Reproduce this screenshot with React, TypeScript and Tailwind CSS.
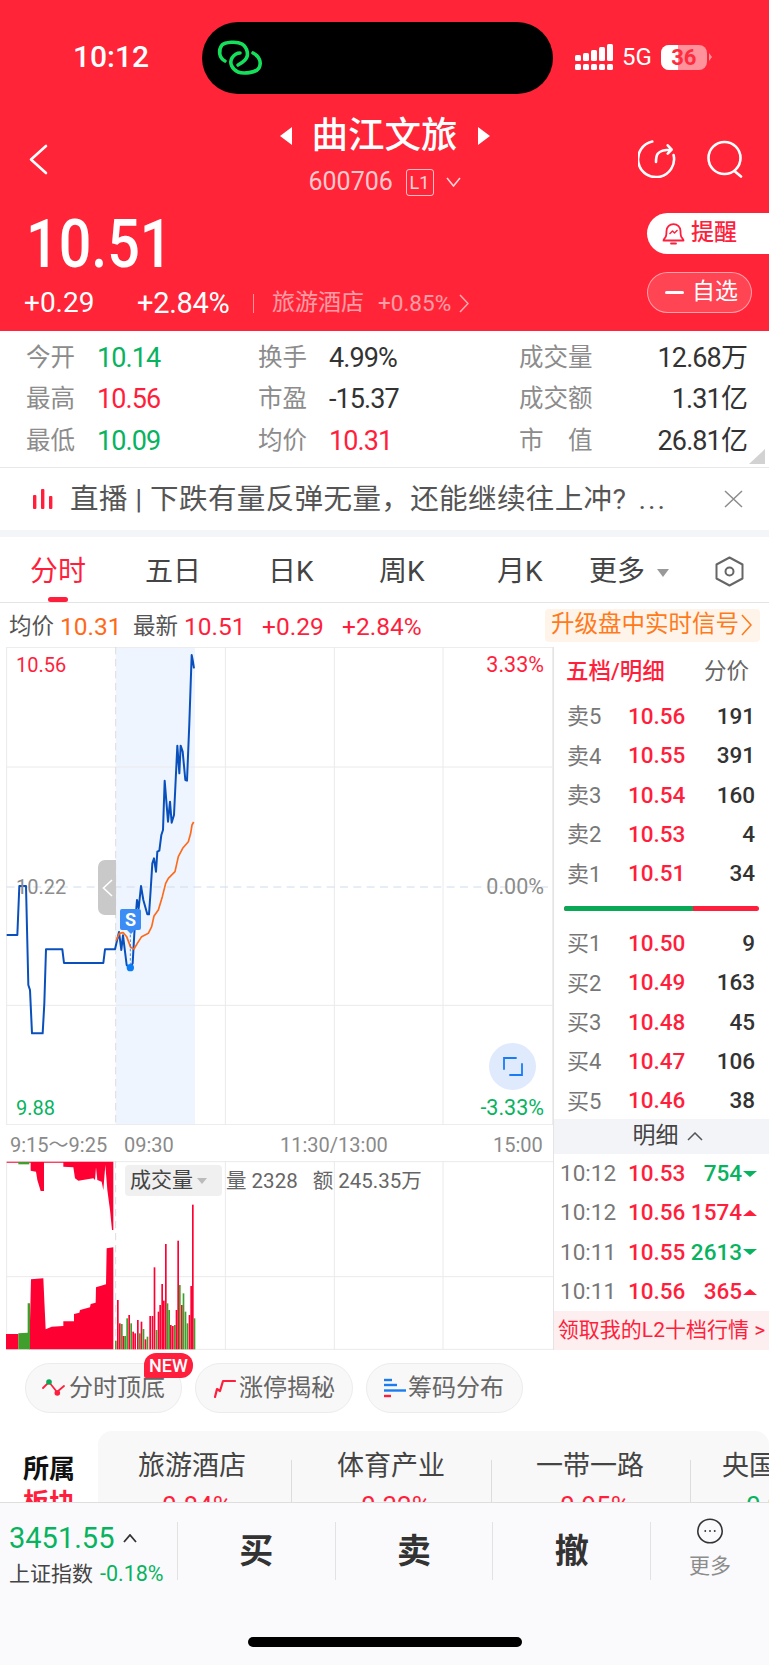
const sans = "font-['Roboto','Noto_Sans_CJK_SC',sans-serif]";

const RED = "text-[#ff1f3d]";
const GREEN = "text-[#08b35f]";

const stats = [
  [
    { label: "今开", value: "10.14", tone: GREEN },
    { label: "换手", value: "4.99%", tone: "text-[#333]" },
    { label: "成交量", value: "12.68万", tone: "text-[#333]" },
  ],
  [
    { label: "最高", value: "10.56", tone: RED },
    { label: "市盈", value: "-15.37", tone: "text-[#333]" },
    { label: "成交额", value: "1.31亿", tone: "text-[#333]" },
  ],
  [
    { label: "最低", value: "10.09", tone: GREEN },
    { label: "均价", value: "10.31", tone: RED },
    { label: "市\u3000值", value: "26.81亿", tone: "text-[#333]" },
  ],
];

const asks = [
  ["卖5", "10.56", "191"],
  ["卖4", "10.55", "391"],
  ["卖3", "10.54", "160"],
  ["卖2", "10.53", "4"],
  ["卖1", "10.51", "34"],
];
const bids = [
  ["买1", "10.50", "9"],
  ["买2", "10.49", "163"],
  ["买3", "10.48", "45"],
  ["买4", "10.47", "106"],
  ["买5", "10.46", "38"],
];
const ticks = [
  { time: "10:12", price: "10.53", qty: "754", up: false },
  { time: "10:12", price: "10.56", qty: "1574", up: true },
  { time: "10:11", price: "10.55", qty: "2613", up: false },
  { time: "10:11", price: "10.56", qty: "365", up: true },
];

const priceLine =
  "20,885 52,885 58,738 78,738 85,1035 90,1050 96,1180 128,1180 133,1090 138,928 187,928 192,969 310,969 315,928 345,928 357,876 364,930 369,886 380,975 390,985 398,970 403,880 411,780 416,805 423,738 430,780 442,823 447,823 452,750 457,670 462,655 468,695 472,635 478,632 484,585 489,570 494,422 504,545 510,485 515,548 522,525 532,317 538,400 542,317 548,335 556,420 561,422 568,250 575,45 578,60 582,85";
const avgLine =
  "348,903 358,880 370,878 380,890 392,922 402,927 412,910 425,890 445,880 455,860 462,828 475,810 487,770 497,730 505,715 525,695 535,650 548,625 565,605 572,580 576,555 581,546";

// opening-session volume bars: x, top, r(ed) or g(reen)
const volBars: [number, number, string][] = [
  [345, 632, "g"], [351, 510, "r"], [357, 580, "r"], [363, 582, "g"], [368, 618, "r"], [373, 618, "g"],
  [379, 565, "g"], [385, 555, "r"], [391, 580, "g"], [397, 605, "r"], [403, 610, "r"], [411, 570, "r"],
  [417, 610, "g"], [422, 575, "r"], [428, 597, "g"], [434, 628, "r"], [440, 620, "g"], [448, 558, "r"],
  [455, 558, "r"], [461, 412, "r"], [467, 600, "g"], [473, 545, "r"], [478, 525, "r"], [484, 462, "r"],
  [489, 512, "r"], [495, 342, "r"], [500, 520, "g"], [505, 540, "g"], [510, 585, "r"], [516, 588, "r"],
  [522, 585, "g"], [527, 540, "r"], [532, 332, "r"], [537, 465, "g"], [543, 525, "r"], [548, 490, "g"],
  [554, 545, "g"], [560, 580, "g"], [566, 555, "r"], [571, 468, "r"], [576, 224, "r"], [581, 565, "g"],
];

function StatusBar() {
  return (
    <div className="flex h-[94px] items-start pt-[22px]">
      <span className="ml-[73px] mt-[20px] w-[80px] text-[30px] leading-[30px] font-medium text-white">10:12</span>
      <div className="ml-[49px] flex h-[72px] w-[351px] items-center rounded-[36px] bg-black pl-[8px]">
        <svg className="mt-[4px]" width="60" height="60" viewBox="0 0 60 60" fill="none" stroke="#14e05c" strokeWidth="3.6" strokeLinecap="round">
          <path d="M15 31 C9 28 8 20 12 15 C15 12 27 11 32 14 C38 18 39 26 35 30 C33 32 30 34 28 35" />
          <path d="M43 23 C49 26 52 32 49 38 C46 43 33 44 28 42 C22 39 19 33 22 28 C24 25 27 23 30 23" />
        </svg>
      </div>
      <div className="ml-[22px] mt-[22px] flex items-center">
        <svg width="38" height="26" viewBox="0 0 38 26" fill="white">
          <rect x="0" y="11" width="6" height="6" rx="1.5" />
          <rect x="0" y="20" width="6" height="6" rx="1.5" />
          <rect x="8" y="9" width="6" height="8" rx="1.5" />
          <rect x="8" y="20" width="6" height="6" rx="1.5" />
          <rect x="16" y="6" width="6" height="11" rx="1.5" />
          <rect x="16" y="20" width="6" height="6" rx="1.5" />
          <rect x="24" y="3" width="6" height="14" rx="1.5" />
          <rect x="24" y="20" width="6" height="6" rx="1.5" />
          <rect x="32" y="0" width="6" height="17" rx="1.5" />
          <rect x="32" y="20" width="6" height="6" rx="1.5" />
        </svg>
        <span className="ml-[9px] text-[24px] leading-[26px] text-white">5G</span>
        <div className="relative ml-[9px] flex h-[25px] w-[46px] items-center justify-center overflow-hidden rounded-[8px] bg-white/50">
          <div className="absolute inset-y-0 left-0 w-[17px] bg-white" />
          <span className="relative text-[22px] leading-[25px] font-bold text-[#ff2c40]">36</span>
        </div>
        <span className="ml-[2px] h-0 w-0 border-y-[4px] border-l-[3px] border-y-transparent border-l-white/50" />
      </div>
    </div>
  );
}

function TitleRow() {
  return (
    <div className="grid h-[100px] grid-cols-[1fr_auto_1fr] pt-[23px]">
      <div className="pl-[29px] pt-[27px]">
        <svg width="19" height="31" viewBox="0 0 19 31" fill="none" stroke="white" strokeWidth="2.6" strokeLinecap="round" strokeLinejoin="round">
          <path d="M17 2 L2 15.5 L17 29" />
        </svg>
      </div>
      <div className="flex flex-col items-center">
        <div className="flex items-center">
          <span className="h-0 w-0 border-y-[9px] border-r-[12px] border-y-transparent border-r-white" />
          <span className="mx-[20px] text-[36.5px] leading-[38px] font-medium text-white">曲江文旅</span>
          <span className="h-0 w-0 border-y-[9px] border-l-[12px] border-y-transparent border-l-white" />
        </div>
        <div className="mt-[13px] flex items-center">
          <span className="w-[97px] text-[25px] leading-[28px] text-white/75">600706</span>
          <span className="flex h-[27px] w-[28px] items-center justify-center rounded-[3px] border border-white/70 text-[18px] text-white/80">L1</span>
          <svg className="ml-[12px]" width="15" height="10" viewBox="0 0 15 10" fill="none" stroke="white" strokeOpacity="0.8" strokeWidth="1.6">
            <path d="M1 1 L7.5 9 L14 1" />
          </svg>
        </div>
      </div>
      <div className="flex justify-end gap-[31px] pr-[25px] pt-[23px]">
        <svg width="38" height="38" viewBox="0 0 38 38" fill="none" stroke="white" strokeWidth="2.6" strokeLinecap="round" strokeLinejoin="round">
          <path d="M14.3 1.5 A18 18 0 1 0 35.6 15" />
          <path d="M18 22 C18 17 18.5 15 20 13.5 C22 11 26 9.7 33 9.7 M29.7 5.3 L33.7 9.7 L29.7 13.7" />
        </svg>
        <svg width="37" height="38" viewBox="0 0 37 38" fill="none" stroke="white" strokeWidth="2.6" strokeLinecap="round">
          <circle cx="17.5" cy="18" r="16" />
          <path d="M28 31.5 L34 36.5" />
        </svg>
      </div>
    </div>
  );
}

function PriceRow() {
  return (
    <div className="flex justify-between">
      <div>
        <div className="ml-[26px] mt-[21px] h-[60px] origin-left scale-x-[.87] text-[66px] leading-[60px] font-medium text-white">10.51</div>
        <div className="mt-[13px] flex items-center pl-[24px] text-white">
          <span className="w-[113px] text-[28px] leading-[30px]">+0.29</span>
          <span className="w-[116px] whitespace-nowrap text-[29px] leading-[30px] tracking-[-0.3px]">+2.84%</span>
          <span className="h-[19px] w-px bg-white/50" />
          <span className="ml-[18px] text-[23px] leading-[30px] text-white/55">旅游酒店</span>
          <span className="ml-[14px] text-[22.5px] leading-[30px] text-white/55">+0.85%</span>
          <svg className="ml-[8px]" width="10" height="19" viewBox="0 0 10 19" fill="none" stroke="white" strokeOpacity="0.6" strokeWidth="1.6">
            <path d="M1 1 L9 9.5 L1 18" />
          </svg>
        </div>
      </div>
      <div className="mt-[19px] flex flex-col items-end">
        <div className="flex h-[41px] w-[122px] items-center gap-[6px] rounded-l-full bg-white pl-[15px]">
          <svg width="23" height="22" viewBox="0 0 23 22" fill="none" stroke="#ff1f3d" strokeWidth="1.8" strokeLinejoin="round">
            <path d="M4 13 C4.5 11 4.5 9.5 4.5 8 C4.5 4 7.5 1.2 11.5 1.2 C15.5 1.2 18.5 4 18.5 8 C18.5 9.5 18.5 11 19 13 C19.5 15 21.5 16 21.5 17.5 H1.5 C1.5 16 3.5 15 4 13 Z" />
            <path d="M9 20.5 H14" strokeLinecap="round" />
            <path d="M7.5 11 L10.5 8 L12.5 10 L15.5 7" strokeWidth="1.4" />
          </svg>
          <span className="text-[23px] font-medium text-[#ff1f3d]">提醒</span>
        </div>
        <div className="mr-[17px] mt-[18px] flex h-[41px] w-[105px] items-center rounded-full border border-white/50 bg-white/15 pl-[17px]">
          <span className="h-[3px] w-[19px] rounded bg-white" />
          <span className="ml-[8px] text-[23px] text-white">自选</span>
        </div>
      </div>
    </div>
  );
}

function StatsTable() {
  return (
    <div className="relative h-[137px] border-b border-[#e8e8e8] bg-white pt-[6px]">
      {stats.map((row) => (
        <div key={row[0].label} className="grid h-[41.5px] grid-cols-[232px_261px_228px] pl-[26px] items-center">
          {row.map((cell, i) => (
            <div key={cell.label} className={i === 2 ? "flex items-center justify-between" : "flex items-center"}>
              <span className={(i === 2 ? "" : "w-[71px] ") + "text-[24.5px] leading-[30px] text-[#8c8c8c]"}>{cell.label}</span>
              <span className={"text-[27px] leading-[30px] tracking-[-0.9px] " + cell.tone}>{cell.value}</span>
            </div>
          ))}
        </div>
      ))}
      <span className="absolute bottom-[3px] right-[4px] h-0 w-0 border-b-[15px] border-l-[16px] border-b-[#d2d2d2] border-l-transparent" />
    </div>
  );
}

function LiveBar() {
  return (
    <div className="flex h-[62px] items-center bg-white pl-[33px]">
      <svg width="20" height="20" viewBox="0 0 20 20" fill="#ff1f3d">
        <rect x="0" y="6" width="3.4" height="14" rx="1" />
        <rect x="8" y="0" width="3.4" height="20" rx="1" />
        <rect x="16" y="7" width="3.4" height="13" rx="1" />
      </svg>
      <span className="ml-[17px] mt-[2px] w-[600px] whitespace-nowrap text-[28.5px] leading-[34px] tracking-[0.4px] text-[#555]">
        直播 | 下跌有量反弹无量，还能继续往上冲?<span className="ml-[12px] tracking-[2px]">...</span>
      </span>
      <svg className="ml-[54px]" width="19" height="18" viewBox="0 0 19 18" fill="none" stroke="#8c8c8c" strokeWidth="1.5">
        <path d="M1 1 L18 17 M18 1 L1 17" />
      </svg>
    </div>
  );
}

function Tabs() {
  return (
    <div className="relative flex h-[66px] items-center border-b border-[#e4e4e4] bg-white pt-[4px] text-[28px] text-[#444]">
      <span className="ml-[30px] w-[115px] text-[#ff1f3d]">分时</span>
      <span className="w-[123px]">五日</span>
      <span className="w-[111px]">日K</span>
      <span className="w-[118px]">周K</span>
      <span className="w-[92px]">月K</span>
      <span>更多</span>
      <span className="ml-[12px] mt-[2px] h-0 w-0 border-x-[6px] border-t-[8px] border-x-transparent border-t-[#999]" />
      <svg className="ml-[46px]" width="29" height="31" viewBox="0 0 29 31" fill="none" stroke="#666" strokeWidth="2">
        <path d="M14.5 1.5 L27.5 8.5 V22.5 L14.5 29.5 L1.5 22.5 V8.5 Z" strokeLinejoin="round" />
        <circle cx="14.5" cy="15.5" r="4" />
      </svg>
      <span className="absolute bottom-0 left-[48px] h-[5px] w-[20px] rounded-full bg-[#ff1f3d]" />
    </div>
  );
}

function QuoteLine() {
  return (
    <div className="flex h-[44px] items-center bg-white pl-[9px] pt-[4px] text-[24.5px]">
      <span className="text-[22.5px] text-[#555]">均价</span>
      <span className="ml-[6px] w-[73px] text-[#ff6a1a]">10.31</span>
      <span className="text-[22.5px] text-[#555]">最新</span>
      <span className="ml-[6px] w-[78px] text-[#ff1f3d]">10.51</span>
      <span className="w-[80px] text-[#ff1f3d]">+0.29</span>
      <span className="w-[203px] text-[#ff1f3d]">+2.84%</span>
      <div className="-mt-[4px] flex h-[33px] w-[215px] items-center whitespace-nowrap rounded-[4px] bg-[#fff4e9] pl-[6px] text-[23.5px] text-[#ff7a1a]">
        升级盘中实时信号
        <svg className="ml-[2px]" width="11" height="22" viewBox="0 0 11 22" fill="none" stroke="#ff7a1a" strokeWidth="1.6">
          <path d="M1 1 L10 11 L1 21" />
        </svg>
      </div>
    </div>
  );
}

function MainChart() {
  return (
    <div className="relative h-[478px]">
      <svg className="absolute inset-0" width="553" height="478" viewBox="0 21 1659 1434" fill="none">
        <rect x="347" y="21" width="238" height="1434" fill="#eef5fe" />
        <g stroke="#eaeaea" strokeWidth="3">
          <path d="M20 21 V1455 M20 22 H1659 M20 381 H1659 M20 1096 H1659 M20 1454 H1659" />
          <path d="M676 21 V1455 M1003 21 V1455 M1329 21 V1455 M1658 21 V1455" />
        </g>
        <path d="M347 21 V1455" stroke="#ddd" strokeWidth="3" strokeDasharray="22 14" />
        <path d="M20 741 H1659" stroke="#cfdcea" strokeWidth="3" strokeDasharray="24 16" />
        <polyline points={priceLine} stroke="#0a50bd" strokeWidth="6" strokeLinejoin="round" />
        <polyline points={avgLine} stroke="#ff6a1a" strokeWidth="5" strokeLinejoin="round" />
        <path d="M391 870 V985" stroke="#1a7cf0" strokeWidth="2.5" strokeDasharray="8 6" />
        <circle cx="391" cy="983" r="11" fill="#0a7cf5" />
      </svg>
      <span className="absolute left-[16px] top-[6px] text-[20px] leading-[24px] text-[#ff1f3d]">10.56</span>
      <span className="absolute left-[16px] top-[228px] text-[20px] leading-[24px] text-[#8c8c8c]">10.22</span>
      <span className="absolute left-[16px] top-[449px] text-[20px] leading-[24px] text-[#08b35f]">9.88</span>
      <span className="absolute right-[9px] top-[6px] text-[21.5px] leading-[24px] text-[#ff1f3d]">3.33%</span>
      <span className="absolute right-[9px] top-[228px] text-[21.5px] leading-[24px] text-[#8c8c8c]">0.00%</span>
      <span className="absolute right-[9px] top-[449px] text-[21.5px] leading-[24px] text-[#08b35f]">-3.33%</span>
      <div className="absolute left-[98px] top-[213px] flex h-[55px] w-[18px] items-center justify-center rounded-l-[7px] bg-[#c9c9c9]">
        <svg width="11" height="18" viewBox="0 0 11 18" fill="none" stroke="white" strokeWidth="1.6">
          <path d="M10 1 L1.5 9 L10 17" />
        </svg>
      </div>
      <div className="absolute left-[120px] top-[262px] flex h-[21px] w-[21px] items-center justify-center rounded-[2px] bg-[#3b8cf5] text-[18px] leading-[21px] font-bold text-white">
        S
        <span className="absolute left-[7px] top-[21px] h-0 w-0 border-x-[4px] border-t-[4px] border-x-transparent border-t-[#3b8cf5]" />
      </div>
      <div className="absolute right-[17px] top-[396px] flex h-[47px] w-[47px] items-center justify-center rounded-full bg-[#dfeafd]">
        <svg width="22" height="21" viewBox="0 0 22 21" fill="none" stroke="#1a7cf5" strokeWidth="1.8" strokeLinecap="round">
          <path d="M14 2 H2 V13 M8 19 H20 V8" />
        </svg>
      </div>
    </div>
  );
}

function AxisRow() {
  return (
    <div className="flex h-[36px] items-center whitespace-nowrap pl-[10px] pt-[3px] text-[20px] text-[#8a8a8a]">
      <span className="w-[114px]">9:15～9:25</span>
      <span className="w-[156px]">09:30</span>
      <span className="w-[213px]">11:30/13:00</span>
      <span>15:00</span>
    </div>
  );
}

function VolumeChart() {
  return (
    <div className="relative h-[189px]">
      <svg className="absolute inset-0" width="553" height="189" viewBox="0 93 1659 567" fill="none">
        <g stroke="#eaeaea" strokeWidth="3">
          <path d="M20 94 V658 M20 95 H1659 M20 440 H1659 M20 658 H1659" />
          <path d="M676 93 V660 M1003 93 V660 M1329 93 V660" />
        </g>
        <path d="M347 93 V660" stroke="#ddd" strokeWidth="3" strokeDasharray="22 14" />
        <path
          d="M20 95 H340 V300 H336 L330 240 L322 180 L316 105 L310 180 L305 155 L292 150 L288 112 L285 150 L280 145 L235 152 L225 145 L220 112 L190 110 L190 98 H132 V183 H122 L112 150 L108 125 L92 122 V98 H20 Z"
          fill="#ff0033"
        />
        <rect x="55" y="96" width="33" height="7" fill="#3f9e2c" />
        <path
          d="M88 658 L93 448 L130 445 L133 512 L137 598 L155 590 L190 588 V574 H222 V552 L238 548 L240 540 L270 532 L272 522 L287 518 L288 472 L318 463 L320 355 L340 352 V658 Z M18 658 V612 H55 V658 Z"
          fill="#ff0033"
        />
        <path d="M55 658 V610 L83 608 V520 H90 V658 Z" fill="#3f9e2c" />
        {volBars.map(([x, top, c]) => (
          <rect key={x} x={x} y={top} width="5" height={658 - top} fill={c === "r" ? "#ff0033" : "#3f9e2c"} />
        ))}
      </svg>
      <div className="absolute left-[125px] top-[4px] flex h-[31px] w-[97px] items-center rounded-[4px] bg-[#f0f0f0] pl-[5px] text-[21px] text-[#444]">
        成交量
        <span className="ml-[4px] h-0 w-0 border-x-[5px] border-t-[6px] border-x-transparent border-t-[#bbb]" />
      </div>
      <div className="absolute left-[226px] top-[6px] text-[20.5px] leading-[28px] text-[#666]">
        量 2328<span className="ml-[15px]">额 245.35万</span>
      </div>
    </div>
  );
}

function BookRow({ row }: { row: string[] }) {
  return (
    <div className="grid h-[39.4px] grid-cols-[61px_1fr_auto] items-center pl-[13px] pr-[14px]">
      <span className="text-[22px] text-[#777]">{row[0]}</span>
      <span className="text-[22.5px] font-medium text-[#ff1f3d]">{row[1]}</span>
      <span className="text-[22.5px] font-medium text-[#333]">{row[2]}</span>
    </div>
  );
}

function OrderBook() {
  return (
    <div className="w-[216px] border-l border-[#e4e4e4]">
      <div className="flex h-[50px] items-center justify-between pl-[12px] pr-[20px] text-[22.5px]">
        <span className="font-medium text-[#ff1f3d]">五档/明细</span>
        <span className="text-[#666]">分价</span>
      </div>
      {asks.map((row) => (
        <BookRow key={row[0]} row={row} />
      ))}
      <div className="mx-[10px] mb-[13px] mt-[12px] flex h-[5px] overflow-hidden rounded-full bg-[#ff1f3d]">
        <div className="w-[129px] bg-[#08a857]" />
      </div>
      {bids.map((row) => (
        <BookRow key={row[0]} row={row} />
      ))}
      <div className="-mt-[2px] flex h-[35px] items-center justify-center gap-[8px] bg-[#f3f4f8] pl-[12px] text-[23px] text-[#444]">
        明细
        <svg width="16" height="9" viewBox="0 0 16 9" fill="none" stroke="#555" strokeWidth="1.5">
          <path d="M1 8 L8 1 L15 8" />
        </svg>
      </div>
      {ticks.map((t, i) => (
        <div key={i} className="flex h-[39.4px] items-center pl-[6px] pr-[12px] text-[22.5px]">
          <span className="w-[68px] text-[#777]">{t.time}</span>
          <span className="font-medium text-[#ff1f3d]">{t.price}</span>
          <span className={"ml-auto font-medium " + (t.up ? "text-[#ff1f3d]" : "text-[#08b35f]")}>{t.qty}</span>
          {t.up ? (
            <span className="ml-px h-0 w-0 border-x-[7px] border-b-[6px] border-x-transparent border-b-[#ff1f3d]" />
          ) : (
            <span className="ml-px h-0 w-0 border-x-[7px] border-t-[6px] border-x-transparent border-t-[#08b35f]" />
          )}
        </div>
      ))}
      <div className="flex h-[39px] items-center justify-center whitespace-nowrap bg-[#fdeeef] text-[21px] text-[#ff1f3d]">领取我的L2十档行情 &gt;</div>
    </div>
  );
}

function Chips() {
  return (
    <div className="flex gap-[13px] pl-[25px] pt-[13px]">
      <div className="relative flex h-[50px] w-[157px] items-center rounded-full border border-[#ececec] bg-[#f8f8f8] pl-[16px] text-[24px] text-[#666]">
        <svg width="24" height="22" viewBox="0 0 24 22" fill="none" stroke="#ff1f3d" strokeWidth="1.8" strokeLinecap="round">
          <path d="M1 11 L7 5 L15 15 L22 9" />
          <circle cx="7" cy="5" r="2.8" fill="#08a857" stroke="none" />
          <circle cx="15.3" cy="16" r="2.8" fill="#ff1f3d" stroke="none" />
        </svg>
        <span className="ml-[3px]">分时顶底</span>
        <span className="absolute left-[118px] top-[-11px] flex h-[25px] w-[49px] items-center justify-center rounded-[12px] rounded-bl-[2px] bg-[#ff1f3d] text-[18px] font-medium text-white">NEW</span>
      </div>
      <div className="flex h-[50px] w-[158px] items-center rounded-full border border-[#ececec] bg-[#f8f8f8] pl-[18px] text-[24px] text-[#666]">
        <svg width="22" height="22" viewBox="0 0 22 22" fill="none" stroke="#ff1f3d" strokeWidth="2.2" strokeLinecap="round" strokeLinejoin="round">
          <path d="M1 20 L3 12 L6 14 L9 4 H21" />
        </svg>
        <span className="ml-[3px]">涨停揭秘</span>
      </div>
      <div className="flex h-[50px] w-[157px] items-center rounded-full border border-[#ececec] bg-[#f8f8f8] pl-[17px] text-[24px] text-[#666]">
        <svg width="22" height="20" viewBox="0 0 22 20" strokeWidth="2.4">
          <path d="M0 2 H8" stroke="#1a7cf0" />
          <path d="M0 7 H13" stroke="#1a7cf0" />
          <path d="M0 12.5 H22" stroke="#1a7cf0" />
          <path d="M0 18 H7" stroke="#ff1f3d" />
        </svg>
        <span className="ml-[2px]">筹码分布</span>
      </div>
    </div>
  );
}

function Sectors() {
  const items = [
    { name: "旅游酒店", pct: "0.84%", w: "w-[194px]", pad: "pl-[40px]", tone: RED },
    { name: "体育产业", pct: "0.32%", w: "w-[200px]", pad: "pl-[45px]", tone: RED },
    { name: "一带一路", pct: "0.95%", w: "w-[199px]", pad: "pl-[44px]", tone: RED },
    { name: "央国企", pct: "0.21%", w: "w-[90px]", pad: "pl-[31px]", tone: GREEN },
  ];
  return (
    <div className="mt-[18px] flex h-[71px] overflow-hidden">
      <div className="w-[98px] shrink-0 pl-[23px] pt-[21px] text-[26px] leading-[34px] font-bold">
        <div className="text-[#111]">所属</div>
        <div className="text-[#ff1f3d]">板块</div>
      </div>
      <div className="flex min-w-0 flex-1 overflow-hidden rounded-t-[14px] bg-[#f8f8f8] pt-[16px]">
        {items.map((s, i) => (
          <div key={s.name} className={s.w + " " + s.pad + " relative shrink-0 text-[27px] leading-[38px] text-[#444] whitespace-nowrap"}>
            <div>{s.name}</div>
            <div className={"mt-[2px] pl-[24px] text-[26px] " + s.tone}>{s.pct}</div>
            {i < 3 && <span className="absolute right-0 top-[13px] h-[60px] w-px bg-[#ddd]" />}
          </div>
        ))}
      </div>
    </div>
  );
}

function BottomBar() {
  return (
    <div className="h-[163px] border-t border-[#dedede] bg-[#fafafc]">
      <div className="mt-[19px] flex h-[58px] items-stretch">
        <div className="w-[177px] pl-[9px]">
          <div className="-mt-[2px] flex items-center">
            <span className="text-[29px] leading-[36px] text-[#08b35f]">3451.55</span>
            <svg className="ml-[9px]" width="14" height="9" viewBox="0 0 14 9" fill="none" stroke="#333" strokeWidth="1.8">
              <path d="M1 8 L7 1 L13 8" />
            </svg>
          </div>
          <div className="mt-[4px] flex items-center whitespace-nowrap">
            <span className="text-[21px] leading-[28px] text-[#444]">上证指数</span>
            <span className="ml-[7px] text-[21.5px] leading-[28px] text-[#08b35f]">-0.18%</span>
          </div>
        </div>
        {["买", "卖", "撤"].map((action) => (
          <div key={action} className="flex w-[158px] items-center justify-center border-l border-[#e2e2e2] text-[34px] font-bold text-[#333]">
            {action}
          </div>
        ))}
        <div className="flex w-[119px] flex-col items-center border-l border-[#e2e2e2]">
          <svg className="-mt-[4px]" width="34" height="33" viewBox="0 0 34 33" fill="none" stroke="#333" strokeWidth="2">
            <ellipse cx="17" cy="16.5" rx="15.5" ry="15" />
            <circle cx="11" cy="16.5" r="1.2" fill="#333" stroke="none" />
            <circle cx="17" cy="16.5" r="1.2" fill="#333" stroke="none" />
            <circle cx="23" cy="16.5" r="1.2" fill="#333" stroke="none" />
          </svg>
          <span className="mt-[8px] text-[21px] leading-[28px] text-[#8c8c8c]">更多</span>
        </div>
      </div>
      <div className="ml-[248px] mt-[57px] h-[10px] w-[274px] rounded-full bg-black" />
    </div>
  );
}

export default function App() {
  return (
    <div className={"h-[1665px] w-[769px] overflow-hidden bg-white " + sans}>
      <header className="h-[331px] bg-[#ff2437]">
        <StatusBar />
        <TitleRow />
        <PriceRow />
      </header>
      <StatsTable />
      <LiveBar />
      <div className="h-[7px] bg-[#f3f5f9]" />
      <Tabs />
      <QuoteLine />
      <div className="flex">
        <div className="w-[553px]">
          <MainChart />
          <AxisRow />
          <VolumeChart />
        </div>
        <OrderBook />
      </div>
      <Chips />
      <Sectors />
      <BottomBar />
    </div>
  );
}
